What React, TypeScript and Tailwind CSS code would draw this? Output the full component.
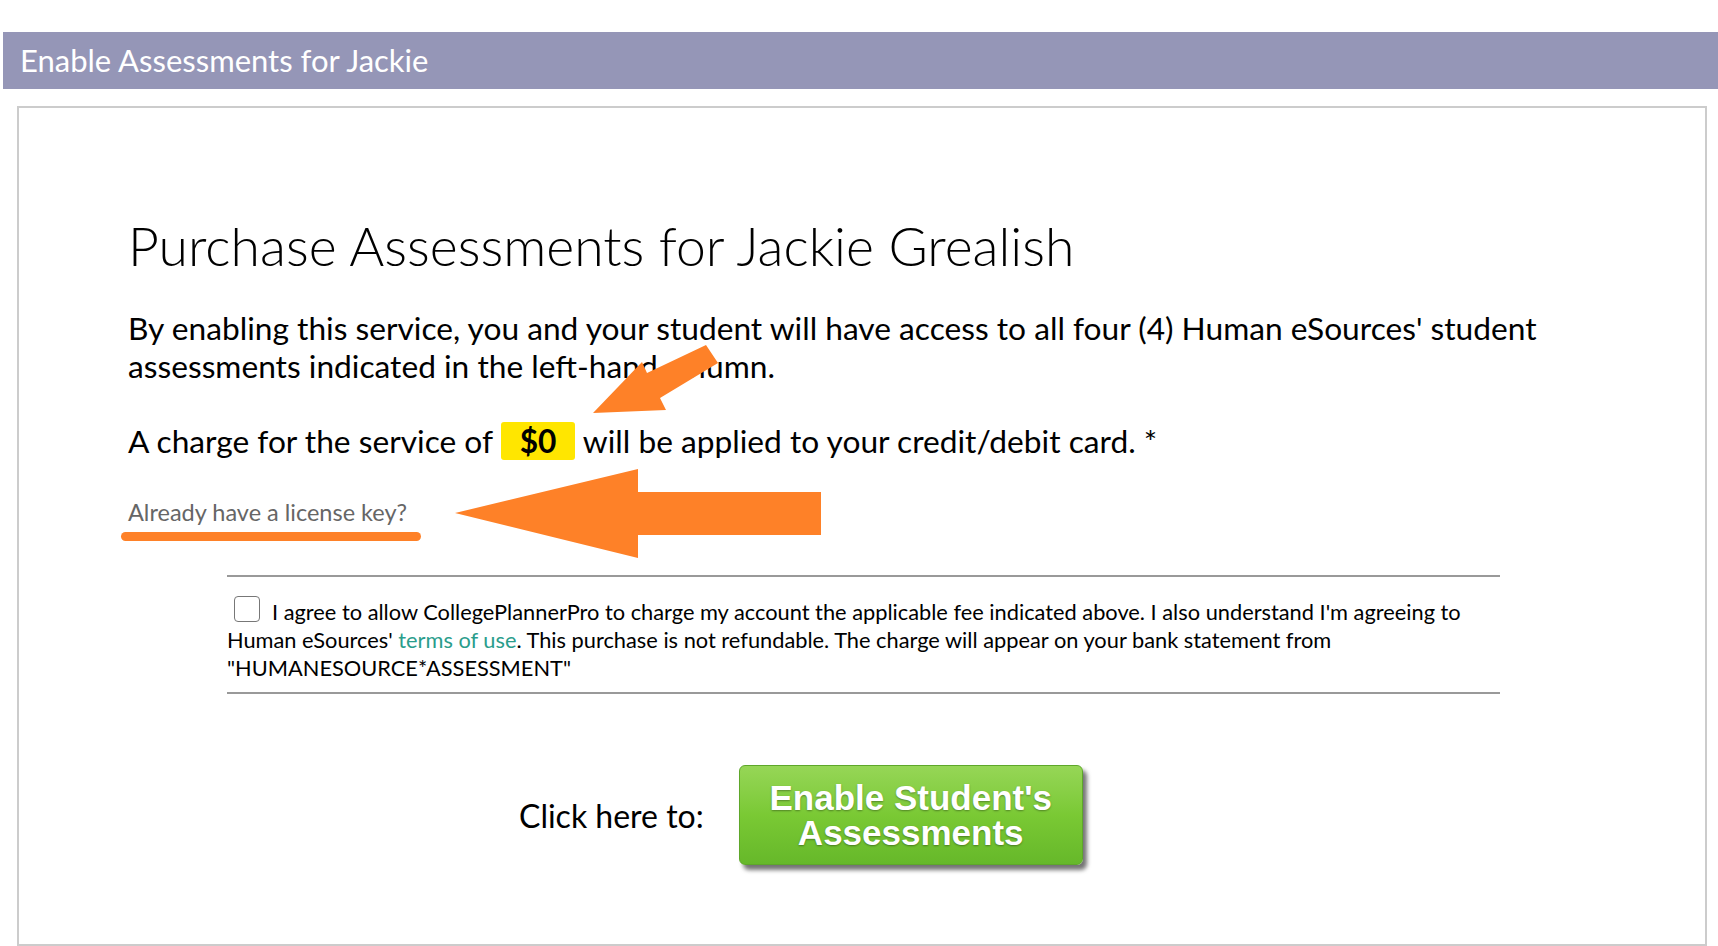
import React from 'react';

const lato = { fontFamily: 'Lato, "Open Sans", sans-serif' };

// annotation overlay: orange arrows + underline drawn on top of the page
const Annotations: React.FC = () => (
  <svg
    className="absolute left-0 top-0 pointer-events-none"
    width={1718}
    height={946}
    viewBox="0 0 1718 946"
  >
    <polygon
      fill="#fe8128"
      points="593,413 642,362 647,373 706,345 718,363 660,398 666,410"
    />
    <polygon
      fill="#fe8128"
      points="455,513 638,469 638,492 821,492 821,535 638,535 638,558"
    />
    <rect x={121} y={532} width={300} height={9} rx={4.5} fill="#fe8128" />
  </svg>
);

const App: React.FC = () => {
  return (
    <div className="relative w-full h-[946px] overflow-hidden bg-white pt-[32px]" style={lato}>
      {/* Title bar */}
      <div className="ml-[3px] h-[57px] bg-[#9596b7] flex items-center pl-[17px] text-white text-[31px]">
        Enable Assessments for Jackie
      </div>

      {/* Panel */}
      <div className="mt-[17px] ml-[17px] w-[1690px] h-[840px] border-2 border-[#cccccc] text-black">
        <h1 className="mt-[107px] ml-[109px] text-[53.5px] leading-[60px] font-light">
          Purchase Assessments for Jackie Grealish
        </h1>

        <p className="mt-[34px] ml-[109px] w-[1480px] text-[31.7px] leading-[38px]">
          By enabling this service, you and your student will have access to all four (4) Human eSources' student assessments indicated in the left-hand column.
        </p>

        <p className="mt-[37px] ml-[109px] text-[31.7px] leading-[38px]">
          A charge for the service of{' '}
          <span className="inline-block align-top h-[38px] px-[19px] bg-[#ffe600] rounded-[3px] font-bold">$0</span>{' '}
          will be applied to your credit/debit card. *
        </p>

        <div className="mt-[38px] ml-[109px] text-[23.5px] leading-[28px] text-[#666666]">
          Already have a license key?
        </div>

        {/* Agreement */}
        <div className="mt-[49px] ml-[208px] w-[1273px] border-y-2 border-[#999999] pt-[21px] pb-[10px] text-[21.8px] leading-[28px]">
          <span className="inline-block align-top w-[26px] h-[26px] mr-[12px] ml-[7px] -mt-[2px] border border-[#777777] rounded-[4px] bg-white" />
          I agree to allow CollegePlannerPro to charge my account the applicable fee indicated above. I also understand I'm agreeing to Human eSources' <span className="text-[#2a9d8c]">terms of use</span>. This purchase is not refundable. The charge will appear on your bank statement from "HUMANESOURCE*ASSESSMENT"
        </div>

        {/* Enable button row */}
        <div className="mt-[71px] ml-[500px] flex items-center">
          <span className="text-[32px] mr-[35px] mt-[2px]">Click here to:</span>
          <button
            className="w-[344px] h-[100px] rounded-[6px] border border-[#5ea72a] bg-gradient-to-b from-[#96d656] via-[#7ac934] to-[#66b82a] shadow-[4px_5px_4px_rgba(0,0,0,0.55)] text-white text-[35px] leading-[35px] font-bold [text-shadow:0_1px_2px_rgba(0,0,0,0.35)]"
            style={{ fontFamily: '"Liberation Sans", Arial, sans-serif' }}
          >
            Enable Student's
            <br />
            Assessments
          </button>
        </div>
      </div>

      <Annotations />
    </div>
  );
};

export default App;
